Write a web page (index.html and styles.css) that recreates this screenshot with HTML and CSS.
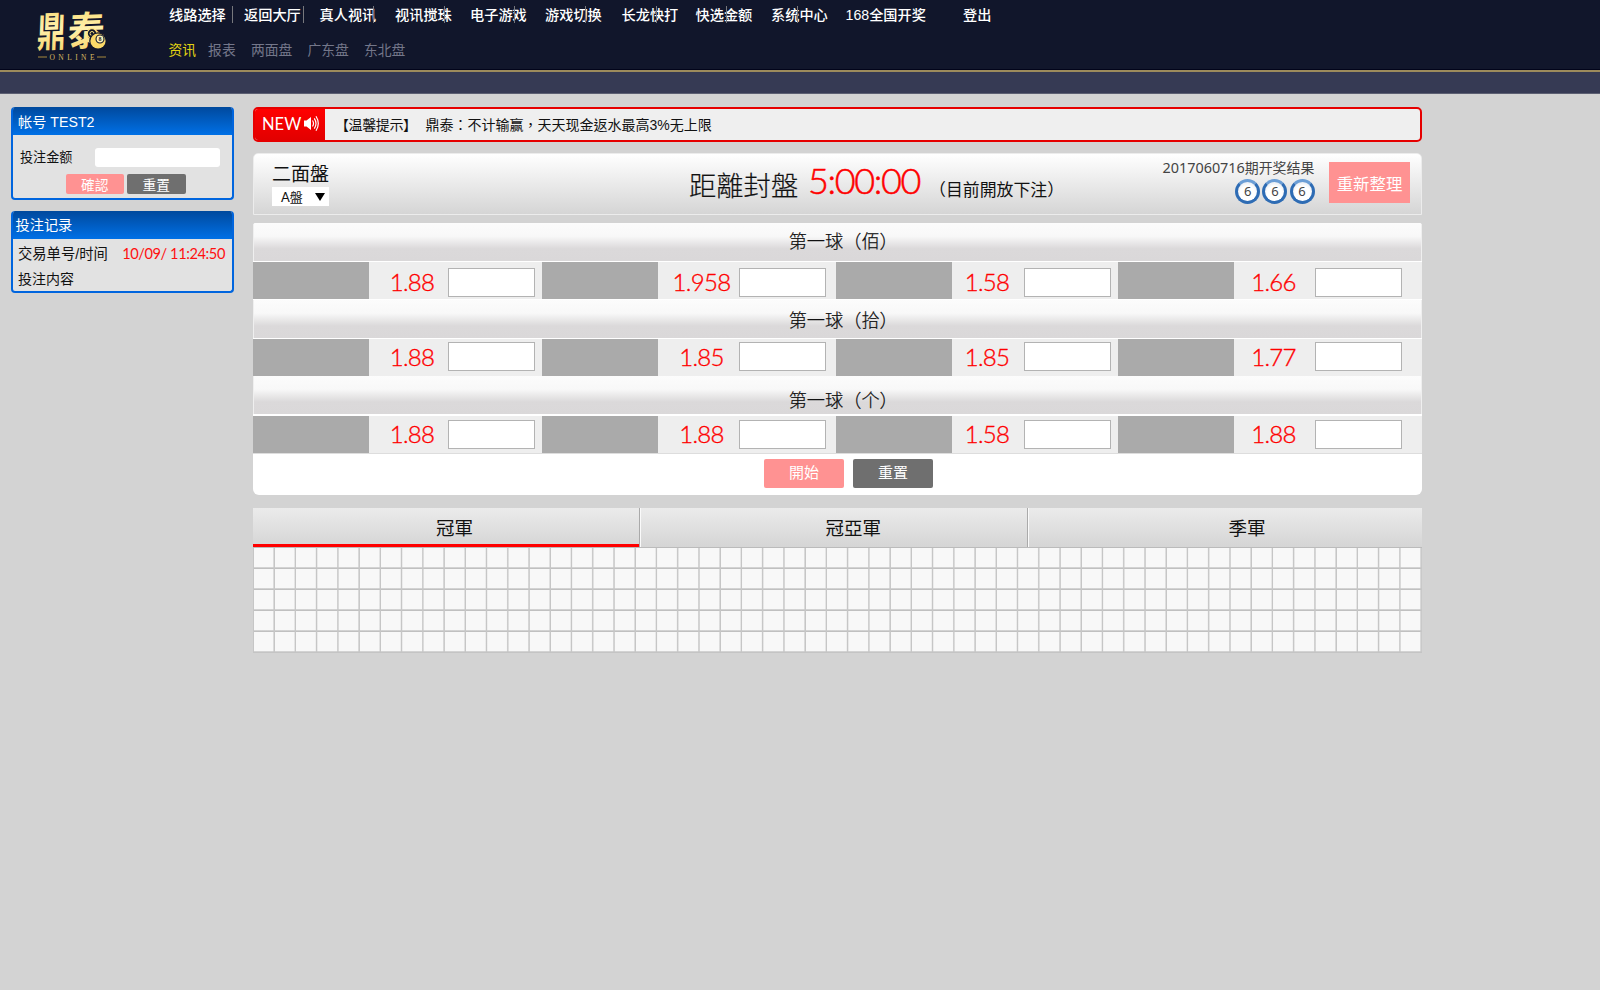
FILE: index.html
```html
<!DOCTYPE html>
<html lang="zh-CN">
<head>
<meta charset="utf-8">
<title>鼎泰 ONLINE</title>
<link rel="stylesheet" href="styles.css">
</head>
<body>
<header class="top">
  <svg class="logo" viewBox="0 0 86 64" width="86" height="64">
    <defs>
      <linearGradient id="gold" x1="0" y1="0" x2="0" y2="1">
        <stop offset="0" stop-color="#f9d765"/><stop offset=".5" stop-color="#fff0ac"/><stop offset="1" stop-color="#f7cf5e"/>
      </linearGradient>
    </defs>
    <g fill="url(#gold)">
      <text class="logo-char" transform="translate(6.500 47) rotate(-2) scale(.72 1.020) skewX(-6)" font-size="40">鼎</text>
      <text class="logo-char" transform="translate(37 46) rotate(-2) scale(.94 1.020) skewX(-6)" font-size="39">泰</text>
    </g>
    <circle cx="62" cy="33.500" r="4.800" fill="#11162b" stroke="#ffe27a" stroke-width="1.3"/>
    <circle cx="62" cy="33.500" r="2" fill="none" stroke="#ffe27a"/>
    <circle cx="68" cy="41" r="8.800" fill="#11162b"/>
    <circle cx="68" cy="41" r="7.600" fill="#fbd968"/>
    <circle cx="70" cy="39" r="4" fill="#fff2b5" stroke="#11162b" stroke-width="1.1"/>
    <text x="70" y="41.200" text-anchor="middle" class="logo-num">8</text>
    <path d="M8 57h9M67 57h9" stroke="#a8893f" stroke-width="1"/>
    <text x="19.500" y="59.500" class="logo-sub" textLength="45">ONLINE</text>
  </svg>
  <div class="menus">
    <nav class="nav">
      <a>线路选择</a><a>返回大厅</a><a>真人视讯</a><a>视讯搅珠</a><a>电子游戏</a><a>游戏切换</a><a>长龙快打</a><a>快选金额</a><a>系统中心</a><a>168全国开奖</a><a>登出</a>
      <div class="seps"><i></i><i></i><i></i><i></i><i></i><i></i><i></i><i></i><i></i></div>
    </nav>
    <nav class="subnav"><a class="on">资讯</a><a>报表</a><a>两面盘</a><a>广东盘</a><a>东北盘</a></nav>
  </div>
</header>
<div class="band"></div>
<div class="page">
  <aside class="side">
    <section class="card account">
      <h2>帐号 TEST2</h2>
      <div class="field"><label>投注金额</label><input type="text"></div>
      <div class="mini-btns"><button class="pink">確認</button><button class="dark">重置</button></div>
    </section>
    <section class="card record">
      <h2>投注记录</h2>
      <div class="line"><span>交易单号/时间</span><span class="date">10/09/ 11:24:50</span></div>
      <div class="line">投注内容</div>
    </section>
  </aside>
  <main class="main">
    <div class="news">
      <div class="tag"><span>NEW</span>
        <svg width="15" height="17" viewBox="0 0 15 17"><path d="M0 5.500h2.500L7 2v13L2.500 11.500H0z" fill="#fff"/><path d="M8.500 5.500q2 3 0 6M10.300 3.300q3.400 5.200 0 10.400M12 1.200q4.600 7.300 0 14.600" fill="none" stroke="#fff" stroke-width="1.200"/></svg>
      </div>
      <p lang="zh-TW"><span class="hint">【温馨提示】</span><span>鼎泰：不计输赢，天天现金返水最高3%无上限</span></p>
    </div>
    <section class="info">
      <div class="kind"><h1>二面盤</h1><div class="select"><span>A盤</span><i></i></div></div>
      <div class="clock"><span class="close">距離封盤</span><span class="time">5:00:00</span><span class="open">（目前開放下注）</span></div>
      <div class="result">
        <p><span>2017060716</span>期开奖结果</p>
        <div class="balls"><b>6</b><b>6</b><b>6</b></div>
      </div>
      <button class="refresh">重新整理</button>
    </section>
    <section class="bets">
      <h3 class="h1">第一球（佰）</h3>
      <div class="row r1">
        <i></i><span>1.88</span><input type="text"><i></i><span>1.958</span><input type="text"><i></i><span>1.58</span><input type="text"><i></i><span>1.66</span><input type="text">
      </div>
      <h3 class="h2">第一球（拾）</h3>
      <div class="row r2">
        <i></i><span>1.88</span><input type="text"><i></i><span>1.85</span><input type="text"><i></i><span>1.85</span><input type="text"><i></i><span>1.77</span><input type="text">
      </div>
      <h3 class="h3">第一球（个）</h3>
      <div class="row r3">
        <i></i><span>1.88</span><input type="text"><i></i><span>1.88</span><input type="text"><i></i><span>1.58</span><input type="text"><i></i><span>1.88</span><input type="text">
      </div>
      <div class="actions"><button class="pink">開始</button><button class="dark">重置</button></div>
    </section>
    <div class="tabs"><div class="tab active">冠軍</div><div class="tab">冠亞軍</div><div class="tab">季軍</div></div>
    <div class="road"></div>
  </main>
</div>
</body>
</html>
```
FILE: styles.css
```css
* { box-sizing: border-box; }
body {
  margin: 0;
  width: 1600px;
  height: 990px;
  overflow: hidden;
  background: #d3d3d3;
  color: #111;
  font-family: "Liberation Sans", "Noto Sans CJK SC", sans-serif;
}
h1, h2, h3, p { margin: 0; font-weight: 400; }
button { border: 0; padding: 0; color: #fff; font-family: "Noto Sans CJK TC", sans-serif; font-weight: 400; }
input { border: 0; padding: 0; background: #fff; }
.pink { background: #ff9292; }
.dark { background: #6f6f6f; }

.top {
  height: 72px;
  display: flex;
  background: #11162b;
  border-bottom: 2px solid #9d8b5c;
  box-shadow: inset 0 -1px #02041a;
}
.logo { margin: 0 0 0 30px; flex: none; overflow: visible; }
.logo-char { font-family: "Noto Sans CJK TC", sans-serif; font-weight: 700; }
.logo-num { font: 700 6px "Liberation Serif", serif; fill: #11162b; }
.logo-sub { font: 7.5px "Liberation Serif", serif; fill: #d9b961; }
.menus { padding: 5px 0 0 53px; }
.nav {
  position: relative;
  display: grid;
  grid-template-columns: 75px 75.5px 75.5px 75px 75px 76.5px 74px 75.5px 74.5px 117.500px 60px;
  height: 20px;
  line-height: 21px;
  font-size: 14.200px;
  font-weight: 500;
  color: #fff;
  white-space: nowrap;
}
.seps { position: absolute; left: 63px; top: 1px; display: flex; gap: 69.600px; }
.seps i { width: 1px; height: 17px; background: #77787d; }
.subnav {
  display: flex;
  margin: 16px 0 0 -.5px;
  line-height: 20px;
  font-size: 13.800px;
  color: #74778a;
  gap: 15.200px;
}
.subnav a:nth-child(2) { margin-left: -3.200px; }
.subnav .on { color: #e3d412; }
.band { height: 22px; background: #363a54; border-bottom: 1px solid #5c5f72; }

.page { display: flex; padding: 13px 0 0 11px; }
.side { width: 242px; }
.card {
  width: 223px;
  border: 2px solid #0065de;
  border-top: 0;
  border-radius: 4px;
  background: #e2e2e2;
  overflow: hidden;
}
.card h2 {
  height: 28px;
  margin: 0 -2px;
  line-height: 29px;
  font-size: 14.200px;
  color: #fff;
  background: linear-gradient(#00499d, #0070e6);
}
.account { height: 93px; }
.account h2 { padding-left: 7px; line-height: 31px; }
.field { display: flex; align-items: center; justify-content: space-between; margin: 13px 12px 0 7px; }
.field label { font-size: 13.1px; line-height: 19px; }
.field input { width: 125px; height: 19px; border-radius: 3px; }
.mini-btns { display: flex; gap: 3px; margin: 7px 0 0 52.500px; }
.mini-btns button { width: 58.500px; height: 20px; border-radius: 2px; font-size: 13.700px; line-height: 20px; }
.record { height: 82px; margin-top: 11px; }
.record h2 { padding-left: 4.500px; }
.line { display: flex; justify-content: space-between; padding: 0 7px 0 5px; line-height: 24.500px; font-size: 14px; }
.line:nth-child(2) { padding-top: 3px; }
.line:nth-child(2) span:first-child { font-size: 14.300px; }
.line .date { font-family: Lato, sans-serif; font-size: 14.600px; letter-spacing: -.4px; color: #ff1010; line-height: 23px; }

.main { width: 1168.500px; }
.news { display: flex; height: 35px; border: 2px solid #e60000; border-radius: 5px; background: #efefef; overflow: hidden; }
.tag { width: 70px; background: linear-gradient(#ff0000, #e20000); color: #fff; display: flex; align-items: center; padding-left: 7px; gap: 3px; font: 16.500px Lato, sans-serif; }
.tag span { width: 39px; line-height: 31px; }
.tag svg { margin-top: -2px; }
.news p { padding-left: 5px; display: flex; font: 14px/32px "Liberation Sans", "Noto Sans CJK TC", sans-serif; }
.hint { width: 95.500px; padding-left: 5px; letter-spacing: -.4px; white-space: nowrap; }

.info {
  display: flex;
  height: 62px;
  margin-top: 11px;
  border: 1px solid #ececec;
  border-radius: 5px 5px 0 0;
  background: linear-gradient(#fff, #d5d5d5);
  font-family: Lato, "Noto Sans CJK TC", sans-serif;
}
.kind { padding: 7px 0 0 18px; width: 435px; }
.kind h1 { font-size: 19px; line-height: 26px; }
.select { width: 57px; height: 19px; background: #fff; display: flex; align-items: center; justify-content: space-between; padding: 0 4.500px 0 9px; font-size: 13px; line-height: 20px; }
.select i { border: 5px solid transparent; border-top: 8px solid #000; border-bottom: 0; }
.clock { display: flex; width: 470.500px; font-weight: 300; }
.close { font-size: 27.300px; line-height: 64px; width: 119px; -webkit-text-stroke: .2px #111; }
.time { font-size: 36px; line-height: 53px; width: 121px; color: #f00; letter-spacing: -1.400px; -webkit-text-stroke: .5px #f00; }
.open { font-size: 16.900px; line-height: 71px; font-weight: 400; white-space: nowrap; }
.result { width: 155px; padding: 3px 0 0 3px; color: #444; font-family: "Noto Sans CJK SC", sans-serif; }
.result p { font-size: 13.900px; line-height: 20px; white-space: nowrap; }
.result p span { font-family: "Noto Sans", sans-serif; font-size: 14.400px; }
.balls { display: flex; gap: 2.300px; margin: 1px 0 0 72.700px; }
.balls b {
  width: 25px; height: 25px; border-radius: 50%;
  border: 3px solid #2e6cb4; border-top-color: #6b9ed6;
  background: radial-gradient(circle at 50% 60%, #fff 50%, #d5dde8);
  font: 13px/18px "Noto Sans", sans-serif; text-align: center; color: #444;
}
.refresh { width: 81px; height: 41px; margin: 8px 0 0 14.500px; background: #ff9292; font-size: 16.400px; }

.bets { margin-top: 8px; height: 272px; background: #fff; border-radius: 3px 3px 6px 6px; overflow: hidden; }
.bets h3 {
  height: 38px;
  border: 1px solid #efefef;
  border-width: 0 1px;
  padding-left: 12px;
  text-align: center;
  font: 18.200px "Noto Sans CJK TC", sans-serif;
  font-weight: 300;
  -webkit-text-stroke: .25px #111;
  background: linear-gradient(#fcfcfc 0, #f8f8f8 35%, #dbd9da 68%, #dad8d9);
}
.bets .h1 { line-height: 34px; }
.bets .h2 { line-height: 39px; }
.bets .h3 { line-height: 46px; }
.row {
  display: grid;
  grid-template-columns: 116px 79px 94px 116px 81px 97px 116px 72px 94px 116px 81px 106.500px;
  grid-template-rows: 100%;
  height: 37px;
  margin: 1px 0;
  background: #eee;
}
.row i { background: #aaa; }
.row span { text-align: center; color: #f00; font: 300 24px/39px Lato, sans-serif; letter-spacing: -.7px; -webkit-text-stroke: .35px #f00; }
.row span:nth-child(2) { padding-left: 7px; }
.row span:nth-child(5) { padding-left: 6px; }
.row span:nth-child(8), .row span:nth-child(11) { padding-right: 2px; }
.row input { width: 87px; height: 29px; margin-top: 6px; border: 1px solid #b3b3b3; }
.r2 { margin-bottom: 0; }
.r2 input { margin-top: 3px; }
.r2 span, .r3 span { line-height: 36px; }
.r3 { height: 38px; margin: 2px 0 0; border-bottom: 1px solid #ddd; }
.r3 input { margin-top: 4px; }
.actions { display: flex; gap: 9px; padding: 5px 0 0 511px; }
.actions button { width: 80px; height: 29px; border-radius: 2px; font-size: 15px; line-height: 26px; padding-bottom: 3px; }

.tabs { display: grid; grid-template-columns: 387px 387.500px 394px; height: 40px; margin-top: 13px; background: linear-gradient(#ebebeb, #d5d5d5); border-bottom: 1px solid #bbb; }
.tab { text-align: center; font: 18.500px/39px "Noto Sans CJK TC", sans-serif; border-right: 1px solid #aaa; border-left: 1px solid #fafafa; padding-left: 39px; }
.tab:first-child { border-left: 0; padding-left: 17px; }
.tab:last-child { border-right: 0; padding-left: 44px; }
.active { height: 39px; box-shadow: inset 0 -3px #f00; }
.road {
  height: 105px;
  border-left: 1px solid #c6c6c6;
  background:
    repeating-linear-gradient(90deg, transparent 0 18.800px, #c6c6c6 20px 20.500px, transparent 21.240px),
    repeating-linear-gradient(transparent 0 18.500px, #c0c0c0 20px 20.500px, transparent 21px),
    #f8f8f8;
  border-bottom: 1px solid #c4c4c4;
}
```
